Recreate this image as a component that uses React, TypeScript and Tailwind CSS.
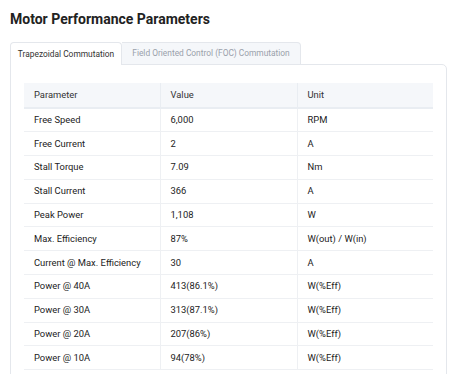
const rows: [string, string, string][] = [
  ['Free Speed', '6,000', 'RPM'],
  ['Free Current', '2', 'A'],
  ['Stall Torque', '7.09', 'Nm'],
  ['Stall Current', '366', 'A'],
  ['Peak Power', '1,108', 'W'],
  ['Max. Efficiency', '87%', 'W(out) / W(in)'],
  ['Current @ Max. Efficiency', '30', 'A'],
  ['Power @ 40A', '413(86.1%)', 'W(%Eff)'],
  ['Power @ 30A', '313(87.1%)', 'W(%Eff)'],
  ['Power @ 20A', '207(86%)', 'W(%Eff)'],
  ['Power @ 10A', '94(78%)', 'W(%Eff)'],
];

const Tabs = () => (
  <div className="flex h-[23px] items-stretch whitespace-nowrap">
    <div className="flex w-[112px] items-center justify-center rounded-t-[4px] border border-b-0 border-[#e4e7ec] bg-white text-[8.4px] text-[#333]">
      Trapezoidal Commutation
    </div>
    <div className="flex w-[179px] items-center justify-center rounded-tr-[4px] border border-l-0 border-[#e4e7ec] bg-[#f5f7fa] text-[8.4px] text-[#9aa1ab]">
      Field Oriented Control (FOC) Commutation
    </div>
  </div>
);

export default function App() {
  return (
    <div className="h-[374px] w-[449px] overflow-hidden bg-white pl-[10px] pr-[2px] font-['Roboto',sans-serif]">
      <h1 className="pt-[8px] pb-[12px] text-[14px] leading-[22px] font-bold text-[#222]">Motor Performance Parameters</h1>
      <Tabs />
      <div className="-mt-px rounded-tr-[5px] border border-[#e4e7ec] px-[13px] pt-[18px] pb-4">
        <table className="w-full border-collapse text-[9.4px] text-[#222]">
          <thead>
            <tr className="h-[25px] border-b-2 border-[#e9edf2] bg-[#f5f7fa] text-left">
              <th className="w-[136px] pl-[10px] font-normal text-[#333]">Parameter</th>
              <th className="w-[137px] border-l border-[#e9edf2] pl-[10px] font-normal text-[#333]">Value</th>
              <th className="border-l border-[#e9edf2] pl-[10px] font-normal text-[#333]">Unit</th>
            </tr>
          </thead>
          <tbody>
            {rows.map(([name, value, unit]) => (
              <tr key={name} className="h-[23.8px] border-b border-[#eef0f3]">
                <td className="pl-[10px]">{name}</td>
                <td className="border-l border-[#eef0f3] pl-[10px]">{value}</td>
                <td className="border-l border-[#eef0f3] pl-[10px]">{unit}</td>
              </tr>
            ))}
          </tbody>
        </table>
      </div>
    </div>
  );
}
